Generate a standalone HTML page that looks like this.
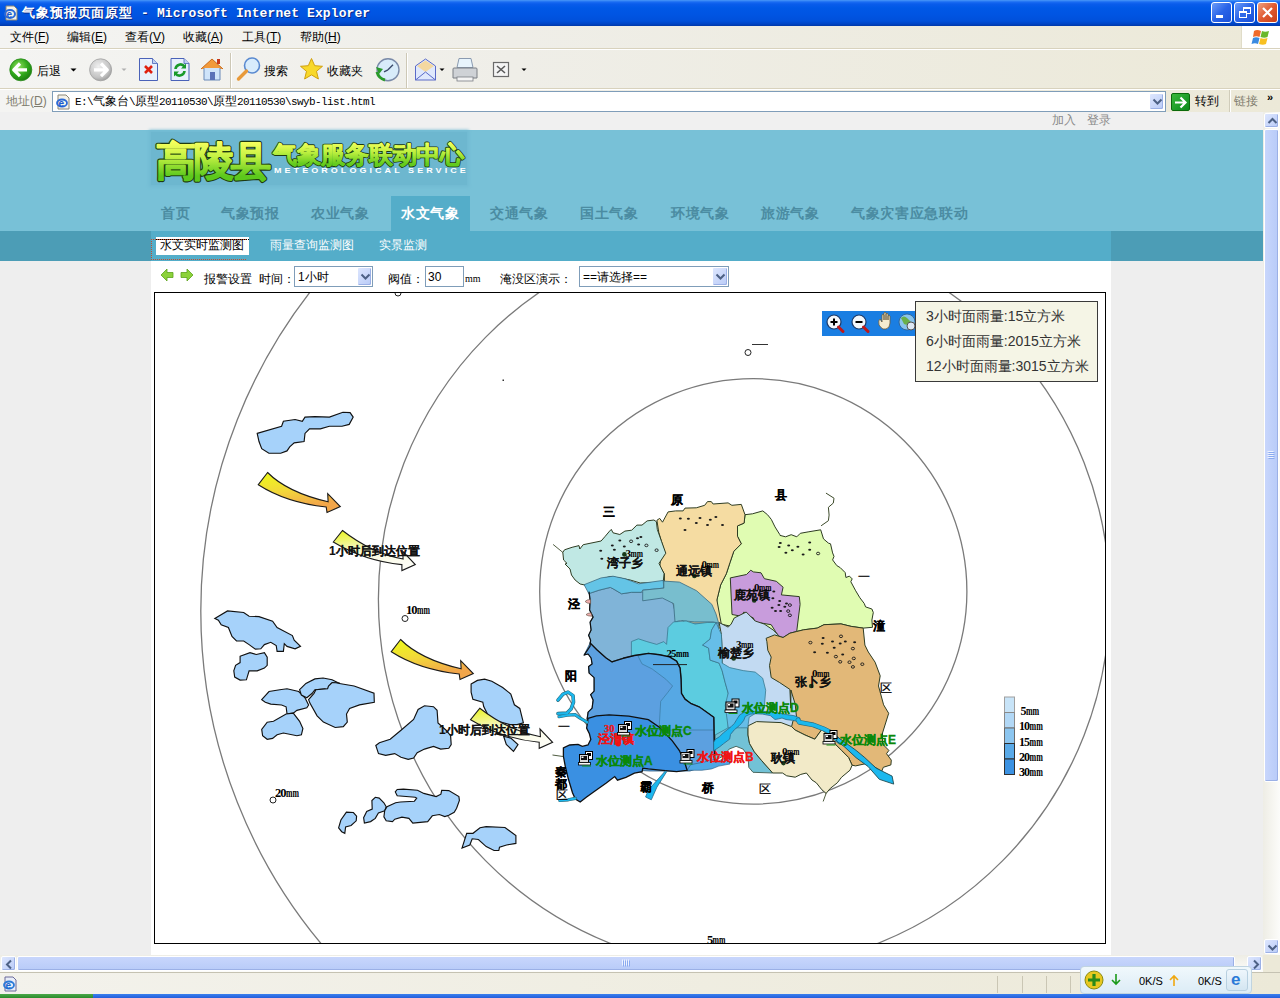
<!DOCTYPE html>
<html><head><meta charset="utf-8">
<style>
*{margin:0;padding:0;box-sizing:border-box}
html,body{width:1280px;height:998px;overflow:hidden;background:#fff;font-family:"Liberation Sans",sans-serif;font-size:12px;color:#000}
.a{position:absolute}
.nw{white-space:nowrap}
#title{left:0;top:0;width:1280px;height:26px;background:linear-gradient(#4a98f8 0,#1a6cf2 2px,#0a5ceb 4px,#0058e6 8px,#0054e2 15px,#0050da 21px,#0044c4 24px,#0038a8 26px)}
#title .t{left:22px;top:4px;color:#fff;font-weight:bold;font-size:13px;white-space:pre;text-shadow:1px 1px 0 #0a2a88}
.tbtn{top:2px;width:21px;height:21px;border:1px solid #fff;border-radius:3px;background:linear-gradient(135deg,#6c9cf8,#2a64e8 50%,#1a50d8)}
#menu{left:0;top:26px;width:1280px;height:23px;background:linear-gradient(to right,#f4f4f2 0,#efeee8 40%,#ece9d8 100%);border-bottom:1px solid #d8d2bd}
#menu span{position:absolute;top:4px;font-size:12px;line-height:14px}
#tb{left:0;top:49px;width:1280px;height:40px;background:linear-gradient(to right,#f4f4f2 0,#efeee8 40%,#ece9d8 100%);border-top:1px solid #fff;border-bottom:1px solid #d8d2bd}
#addr{left:0;top:89px;width:1280px;height:23px;background:linear-gradient(to right,#f4f4f2 0,#efeee8 40%,#ece9d8 100%);border-top:1px solid #fff}
#vs{left:1263px;top:112px;width:17px;height:843px;background:linear-gradient(to right,#eeede5,#fcfcfa)}
#hs{left:0;top:955px;width:1263px;height:17px;background:linear-gradient(#eeede5,#fcfcfa)}
.sbtn{border:1px solid #fff;border-radius:2px;background:linear-gradient(135deg,#dde6fe,#b9cbf7);box-shadow:inset -1px -1px 0 #9bb0e6}
#status{left:0;top:972px;width:1280px;height:22px;background:linear-gradient(to right,#f3f2ec,#ece9d8);border-top:1px solid #c5c2b2}
#task{left:0;top:994px;width:1280px;height:4px;background:linear-gradient(#3a80ee,#245edb)}
.nav{top:205px;font-size:14px;font-weight:bold;color:#4b8ca2;line-height:16px;letter-spacing:0.7px}
.sub{top:238px;font-size:12px;color:#fff;line-height:14px}
</style></head><body>
<div id="title" class="a"><div class="t a"><span style="letter-spacing:0.9px">气象预报页面原型</span><span style="font-family:'Liberation Mono',monospace;letter-spacing:0.1px"> - Microsoft Internet Explorer</span></div>
<svg class="a" style="left:3px;top:5px" width="16" height="16" viewBox="0 0 16 16"><path d="M3 1h8l3 3v11H3z" fill="#f4f2ea" stroke="#8a8676" stroke-width="1"/><ellipse cx="7" cy="9" rx="5" ry="4" fill="none" stroke="#2a6ad8" stroke-width="2"/><text x="3.5" y="12.5" font-size="10" font-weight="bold" fill="#1a5ad0" font-family="Liberation Sans">e</text></svg>
<div class="a tbtn" style="left:1211px"><div class="a" style="left:4px;top:12px;width:7px;height:3px;background:#fff"></div></div>
<div class="a tbtn" style="left:1234px"><div class="a" style="left:8px;top:4px;width:8px;height:7px;border:1px solid #fff;border-top-width:2px"></div><div class="a" style="left:4px;top:8px;width:8px;height:7px;border:1px solid #fff;border-top-width:2px;background:#2e68e8"></div></div>
<div class="a tbtn" style="left:1257px;background:linear-gradient(135deg,#f0a080,#e05a30 50%,#c8401a)"><svg class="a" style="left:3px;top:3px" width="13" height="13"><path d="M2 2L11 11M11 2L2 11" stroke="#fff" stroke-width="2.2"/></svg></div>
</div>
<div id="menu" class="a">
<span style="left:10px">文件(<u>F</u>)</span><span style="left:67px">编辑(<u>E</u>)</span><span style="left:125px">查看(<u>V</u>)</span><span style="left:183px">收藏(<u>A</u>)</span><span style="left:242px">工具(<u>T</u>)</span><span style="left:300px">帮助(<u>H</u>)</span>
<div class="a" style="left:1241px;top:0;width:39px;height:22px;background:#fff;border-left:1px solid #e0dcc8"></div>
<svg class="a" style="left:1251px;top:2px" width="22" height="19" viewBox="0 0 22 19"><path d="M3 3q3-2 7 0l-1.5 6q-3-1.5-6.5 0z" fill="#f06a2a"/><path d="M11 3q3 1.5 7 0l-1.5 6q-3 1.5-7 0z" fill="#6ab82a"/><path d="M2 10q3-1.5 6.5 0L7 16q-3-1.5-6.5 0z" fill="#3a8ae0"/><path d="M9.5 10q3 1.5 7 0L15 16q-3 1.5-7 0z" fill="#f8c020"/></svg>
</div>
<div id="tb" class="a">
 <svg class="a" style="left:0;top:0" width="540" height="40">
  <defs><radialGradient id="gg" cx="0.4" cy="0.35" r="0.7"><stop offset="0" stop-color="#8ee05a"/><stop offset="0.6" stop-color="#2ea61a"/><stop offset="1" stop-color="#1a7a10"/></radialGradient>
  <radialGradient id="gy" cx="0.4" cy="0.35" r="0.7"><stop offset="0" stop-color="#f0f0f0"/><stop offset="0.7" stop-color="#c4c4c4"/><stop offset="1" stop-color="#9a9a9a"/></radialGradient></defs>
  <circle cx="20.8" cy="19.8" r="11" fill="url(#gg)" stroke="#2a8a1a" stroke-width="0.8"/>
  <path d="M14 19.8h13M20 13.5l-6.3 6.3 6.3 6.3" fill="none" stroke="#fff" stroke-width="3.2" stroke-linejoin="round"/>
  <text x="37" y="24.5" font-size="12" font-family="Liberation Sans">后退</text>
  <path d="M70.5 18.5h6l-3 3z" fill="#000"/>
  <circle cx="100.6" cy="19.8" r="11" fill="url(#gy)" stroke="#a0a0a0" stroke-width="0.8"/>
  <path d="M94 19.8h13M101 13.5l6.3 6.3-6.3 6.3" fill="none" stroke="#fff" stroke-width="3.2" stroke-linejoin="round"/>
  <path d="M121.5 18.5h5l-2.5 2.5z" fill="#b0b0b0"/>
  <path d="M139.5 8.5h13l5 5v17h-18z" fill="#e8f0fc" stroke="#4a62b8" stroke-width="1"/><path d="M152.5 8.5v5h5" fill="#c0d0f0" stroke="#4a62b8" stroke-width="0.8"/>
  <path d="M145 16l7 7M152 16l-7 7" stroke="#e02010" stroke-width="2.6"/>
  <path d="M171 8.5h13l5 5v17h-18z" fill="#e8f0fc" stroke="#4a62b8" stroke-width="1"/><path d="M184 8.5v5h5" fill="#c0d0f0" stroke="#4a62b8" stroke-width="0.8"/>
  <path d="M175.5 19a5 5 0 0 1 9-2.5M184.5 21a5 5 0 0 1-9 2.5" fill="none" stroke="#1a9a2a" stroke-width="2.6"/><path d="M186 13.5v5h-5z M174 26.5v-5h5z" fill="#1a9a2a"/>
  <path d="M201 19l11-10 11 10" fill="#f29a3a" stroke="#c86a1a" stroke-width="1"/><path d="M204 18v12h16v-12" fill="#cfe4fa" stroke="#6a8ab8" stroke-width="1"/><rect x="210" y="22" width="5" height="8" fill="#5a72b8"/><rect x="217" y="9" width="3" height="5" fill="#c83a1a"/>
  <line x1="230.5" y1="3" x2="230.5" y2="38" stroke="#cdc8b6"/><line x1="231.5" y1="3" x2="231.5" y2="38" stroke="#fff"/>
  <circle cx="252" cy="15.5" r="7.5" fill="#d8ecfc" stroke="#5a8ad0" stroke-width="1.6"/><path d="M246.5 21l-8 8" stroke="#e89a3a" stroke-width="3.4" stroke-linecap="round"/>
  <text x="264" y="24.5" font-size="12" font-family="Liberation Sans">搜索</text>
  <path d="M311.5 8.5l3.2 7.2 7.8 0.6-6 5 1.9 7.7-6.9-4.1-6.9 4.1 1.9-7.7-6-5 7.8-0.6z" fill="#f8d82a" stroke="#d0a010" stroke-width="1"/>
  <text x="327" y="24.5" font-size="12" font-family="Liberation Sans">收藏夹</text>
  <circle cx="388" cy="19.8" r="11" fill="#d8ecfa" stroke="#7a8aa8" stroke-width="1.4"/><path d="M388 19.8l5-5M388 19.8l-4 2" stroke="#3a4a6a" stroke-width="1.4"/><path d="M377 22a11 11 0 0 0 8 8" stroke="#2a9a2a" stroke-width="3" fill="none"/><path d="M376 17l3 7 4-5z" fill="#2a9a2a"/>
  <line x1="406.5" y1="3" x2="406.5" y2="38" stroke="#cdc8b6"/><line x1="407.5" y1="3" x2="407.5" y2="38" stroke="#fff"/>
  <path d="M415.5 16l10-7 10 7v14h-20z" fill="#dfe8fc" stroke="#5a6ac8" stroke-width="1"/><path d="M417 16l8.5-5.5 8.5 5.5-8.5 6z" fill="#f4d8a0"/><path d="M415.5 30l10-8 10 8" fill="none" stroke="#5a6ac8" stroke-width="1"/>
  <path d="M439.5 18.5h5l-2.5 2.5z" fill="#000"/>
  <path d="M459 8.5h12l2 9h-16z" fill="#e8f4fc" stroke="#8a9ab0" stroke-width="1"/><path d="M454 18h22q1 0 1 1v9h-24v-9q0-1 1-1z" fill="#cfd2d6" stroke="#7a7e84" stroke-width="1"/><rect x="457" y="27" width="16" height="4" fill="#f4f4f4" stroke="#7a7e84" stroke-width="0.8"/>
  <rect x="493.5" y="12.5" width="15" height="14" fill="#f4f4f4" stroke="#6a6a6a" stroke-width="1.2"/><path d="M497 16l8 7M505 16l-8 7" stroke="#5a5a5a" stroke-width="1.6"/>
  <path d="M521.5 18.5h5l-2.5 2.5z" fill="#000"/>
 </svg>
</div>
<div id="addr" class="a">
 <div class="a" style="left:6px;top:4px;color:#7f7c6e;font-size:12px;line-height:14px">地址(<u>D</u>)</div>
 <div class="a" style="left:52px;top:1px;width:1114px;height:21px;background:#fff;border:1px solid #7f9db9"></div>
 <svg class="a" style="left:55px;top:4px" width="16" height="16" viewBox="0 0 16 16"><path d="M3 1h8l3 3v11H3z" fill="#f4f2ea" stroke="#8a8676" stroke-width="1"/><ellipse cx="7" cy="9" rx="5" ry="3.5" fill="none" stroke="#2a6ad8" stroke-width="1.8"/><text x="3.5" y="12.5" font-size="10" font-weight="bold" fill="#1a5ad0" font-family="Liberation Sans">e</text></svg>
 <div class="a nw" style="left:75px;top:5px;font-size:11px;line-height:14px;font-family:'Liberation Mono',monospace;letter-spacing:-0.6px">E:\<span style="font-size:12px;letter-spacing:0">气象台</span>\<span style="font-size:12px;letter-spacing:0">原型</span>20110530\<span style="font-size:12px;letter-spacing:0">原型</span>20110530\swyb-list.html</div>
 <div class="a sbtn" style="left:1149px;top:3px;width:15px;height:17px"><svg class="a" style="left:2px;top:4px" width="11" height="8"><path d="M1.5 1.5l4 4 4-4" fill="none" stroke="#4d6185" stroke-width="2"/></svg></div>
 <div class="a" style="left:1171px;top:3px;width:19px;height:18px;border-radius:2px;background:linear-gradient(135deg,#3ab83a,#0a8a1a);border:1px solid #0a6a0a"><svg class="a" style="left:2px;top:2px" width="14" height="13"><path d="M1 6.5h10M6.5 1.5l5 5-5 5" fill="none" stroke="#fff" stroke-width="2.2"/></svg></div>
 <div class="a" style="left:1195px;top:4px;font-size:12px;line-height:14px">转到</div>
 <div class="a" style="left:1229px;top:0;width:1px;height:23px;background:#d0ccba"></div><div class="a" style="left:1230px;top:0;width:1px;height:23px;background:#fff"></div>
 <div class="a" style="left:1234px;top:4px;font-size:12px;line-height:14px;color:#7f7c6e">链接</div>
 <div class="a" style="left:1267px;top:1px;font-size:11px;font-weight:bold;line-height:12px">»</div>
</div>

<!-- page -->
<div class="a" style="left:0;top:112px;width:1263px;height:843px;background:#eeeeee;overflow:hidden">
  <div class="a" style="left:0;top:0;width:1263px;height:18px;background:#f0f0f0"></div>
  <div class="a nw" style="left:1052px;top:1px;color:#8a8a8a;font-size:12px;line-height:14px">加入<span style="display:inline-block;width:11px"></span>登录</div>
  <div class="a" style="left:0;top:18px;width:1263px;height:101px;background:#78c1d7"></div>
  <div class="a" style="left:0;top:119px;width:1263px;height:30px;background:#4c9db6"></div>
  <div class="a" style="left:151px;top:119px;width:960px;height:30px;background:#54adc9"></div>
  <div class="a" style="left:151px;top:149px;width:960px;height:694px;background:#fff"></div>
</div>
<!-- header logo -->
<div class="a" style="left:151px;top:132px;width:316px;height:53px;background:#6db7cf;box-shadow:0 0 3px 2px #71bad2"></div>
<svg class="a" style="left:150px;top:130px" width="330" height="60"><defs>
<linearGradient id="lg1" gradientUnits="userSpaceOnUse" x1="0" y1="10" x2="0" y2="46"><stop offset="0.05" stop-color="#f6ff5e"/><stop offset="0.45" stop-color="#c6f244"/><stop offset="1" stop-color="#5cc81c"/></linearGradient>
<linearGradient id="lg2" gradientUnits="userSpaceOnUse" x1="0" y1="12" x2="0" y2="34"><stop offset="0.05" stop-color="#f0ff5a"/><stop offset="0.5" stop-color="#b8ee3e"/><stop offset="1" stop-color="#62ca1e"/></linearGradient></defs>
<g font-family="Liberation Sans" font-weight="900" stroke-linejoin="round">
<text x="6" y="45" font-size="40" letter-spacing="-2.4" fill="#1e3a10" stroke="#1e3a10" stroke-width="3.6">高陵县</text>
<text x="6" y="45" font-size="40" letter-spacing="-2.4" fill="url(#lg1)" stroke="url(#lg1)" stroke-width="1.4">高陵县</text>
<text x="123" y="33" font-size="24" letter-spacing="-0.1" fill="#1e3a10" stroke="#1e3a10" stroke-width="2.6">气象服务联动中心</text>
<text x="123" y="33" font-size="24" letter-spacing="-0.1" fill="url(#lg2)" stroke="url(#lg2)" stroke-width="0.9">气象服务联动中心</text>
</g></svg>
<div id="met" class="a nw" style="left:274px;top:167px;font-size:9px;font-weight:bold;line-height:9px;color:#fff;letter-spacing:3.05px;transform:scaleY(0.78);transform-origin:0 50%">METEOROLOGICAL SERVICE</div>
<!-- nav -->
<div class="a" style="left:391px;top:196px;width:79px;height:35px;background:#54adc9"></div>
<div class="a nav nw" style="left:161px">首页</div>
<div class="a nav nw" style="left:221px">气象预报</div>
<div class="a nav nw" style="left:311px">农业气象</div>
<div class="a nav nw" style="left:401px;color:#fff">水文气象</div>
<div class="a nav nw" style="left:490px">交通气象</div>
<div class="a nav nw" style="left:580px">国土气象</div>
<div class="a nav nw" style="left:671px">环境气象</div>
<div class="a nav nw" style="left:761px">旅游气象</div>
<div class="a nav nw" style="left:851px">气象灾害应急联动</div>
<!-- subnav -->
<div class="a" style="left:156px;top:237px;width:93px;height:18px;background:#fff"></div>
<div class="a" style="left:151px;top:239px;width:95px;height:21px;border:1px dotted #c05030;border-right:none"></div><div class="a" style="left:156px;top:239px;width:93px;height:1px;border-top:1px dotted #000"></div>
<div class="a sub nw" style="left:160px;color:#000">水文实时监测图</div>
<div class="a sub nw" style="left:270px">雨量查询监测图</div>
<div class="a sub nw" style="left:379px">实景监测</div>
<!-- tools row -->
<svg class="a" style="left:158px;top:267px" width="40" height="18"><path d="M3 8l6-6v3.5h6v5H9V14z" fill="#8cd23a" stroke="#5aa21a" stroke-width="0.8"/><path d="M35 8l-6-6v3.5h-6v5h6V14z" fill="#8cd23a" stroke="#5aa21a" stroke-width="0.8"/></svg>
<div class="a nw" style="left:204px;top:272px;font-size:12px;line-height:14px">报警设置&nbsp;&nbsp;时间：</div>
<div class="a" style="left:294px;top:266px;width:79px;height:21px;border:1px solid #7f9db9;background:#fff"></div>
<div class="a nw" style="left:298px;top:270px;font-size:12px;line-height:14px">1小时</div>
<div class="a sbtn" style="left:357px;top:267px;width:15px;height:19px"><svg class="a" style="left:2px;top:5px" width="11" height="8"><path d="M1.5 1.5l4 4 4-4" fill="none" stroke="#4d6185" stroke-width="2"/></svg></div>
<div class="a nw" style="left:388px;top:272px;font-size:12px;line-height:14px">阀值：</div>
<div class="a" style="left:425px;top:266px;width:39px;height:21px;border:1px solid #7f9db9;background:#fff"></div>
<div class="a nw" style="left:428px;top:270px;font-size:12px;line-height:14px">30</div>
<div class="a nw" style="left:465px;top:273px;font-size:10px;line-height:12px;font-family:'Liberation Serif',serif">mm</div>
<div class="a nw" style="left:500px;top:272px;font-size:12px;line-height:14px">淹没区演示：</div>
<div class="a" style="left:579px;top:266px;width:150px;height:21px;border:1px solid #7f9db9;background:#fff"></div>
<div class="a nw" style="left:583px;top:270px;font-size:12px;line-height:14px">==请选择==</div>
<div class="a sbtn" style="left:712px;top:267px;width:16px;height:19px"><svg class="a" style="left:2px;top:5px" width="11" height="8"><path d="M1.5 1.5l4 4 4-4" fill="none" stroke="#4d6185" stroke-width="2"/></svg></div>
<!-- map box -->
<div class="a" style="left:154px;top:292px;width:952px;height:652px;border:1px solid #000;background:#fff"></div>
<svg class="a" style="left:0;top:0" width="1280" height="998" viewBox="0 0 1280 998">
<defs><linearGradient id="ga" x1="0" y1="0" x2="0.35" y2="1"><stop offset="0.1" stop-color="#eef41e"/><stop offset="0.5" stop-color="#f2d83a"/><stop offset="0.95" stop-color="#f2a64a"/></linearGradient><linearGradient id="gp" x1="0" y1="0" x2="0.3" y2="1"><stop offset="0.05" stop-color="#eaf42a"/><stop offset="0.45" stop-color="#f4f6b4"/><stop offset="0.7" stop-color="#fafae2"/><stop offset="1" stop-color="#fdfdf4"/></linearGradient><clipPath id="mc"><rect x="155" y="293" width="950" height="650"/></clipPath></defs>
<g clip-path="url(#mc)">
<ellipse cx="753.3" cy="591.4" rx="213.6" ry="212.7" fill="none" stroke="#7a7a7a" stroke-width="1.3"/>
<ellipse cx="744.1" cy="599" rx="365.7" ry="370" fill="none" stroke="#7a7a7a" stroke-width="1.3"/>
<circle cx="720.6" cy="611" r="519.8" fill="none" stroke="#7a7a7a" stroke-width="1.3"/>
<path d="M257.2,433.4 L281.6,426.2 L283.4,421.3 L295.1,419.5 L302.3,421.3 L305.0,417.1 L314.9,416.6 L329.4,417.1 L342.9,412.3 L350.1,412.6 L353.2,417.1 L349.2,424.4 L342.0,426.2 L329.4,426.2 L320.3,428.9 L309.5,428.9 L305.0,433.4 L304.1,441.5 L294.2,442.9 L289.7,446.9 L287.0,450.9 L280.7,453.2 L268.9,453.2 L261.7,448.7 L259.0,441.5Z" fill="#a6d2fa" stroke="#111" stroke-width="1.15" />
<path d="M214.8,618.4 L227.5,610.9 L243.7,612.5 L249.1,616.3 L259.0,616.6 L272.6,621.2 L277.1,627.5 L292.4,635.6 L294.2,640.1 L300.5,646.4 L295.1,648.8 L287.0,646.4 L284.3,643.7 L283.4,651.3 L277.1,651.3 L276.2,645.5 L270.8,642.3 L264.4,644.6 L260.8,648.8 L255.4,649.1 L249.1,644.6 L243.7,641.0 L236.5,641.0 L232.0,636.5 L228.4,627.5 L221.2,624.8 L218.4,620.3Z" fill="#a6d2fa" stroke="#111" stroke-width="1.15" />
<path d="M240.1,656.3 L250.0,652.7 L256.3,654.5 L264.4,652.7 L267.2,657.2 L267.2,665.3 L264.4,668.1 L257.2,670.8 L249.1,670.8 L246.4,679.8 L240.1,680.1 L234.7,677.1 L233.8,670.8 L235.6,665.3 L240.1,662.6Z" fill="#a6d2fa" stroke="#111" stroke-width="1.15" />
<path d="M261.7,699.6 L269.0,691.5 L279.8,689.7 L287.0,688.8 L298.7,691.5 L305.0,697.8 L308.6,705.0 L306.8,707.7 L296.9,710.4 L293.3,713.1 L287.0,713.7 L286.1,706.8 L281.6,705.0 L270.8,704.1 L265.3,702.3Z" fill="#a6d2fa" stroke="#111" stroke-width="1.15" />
<path d="M267.2,722.2 L273.5,721.3 L286.1,714.0 L293.3,713.1 L299.6,721.3 L302.9,728.5 L301.4,734.8 L296.9,735.7 L283.4,733.0 L277.1,734.8 L272.6,738.4 L267.2,739.3 L262.6,735.7 L261.7,729.4Z" fill="#a6d2fa" stroke="#111" stroke-width="1.15" />
<path d="M299.6,689.7 L305.9,683.4 L314.9,678.9 L323.1,678.0 L332.1,679.8 L337.5,682.5 L331.2,683.4 L328.5,689.7 L324.9,688.8 L314.9,689.7 L312.2,693.3 L306.8,697.8 L301.4,695.1Z" fill="#a6d2fa" stroke="#111" stroke-width="1.15" />
<path d="M308.6,699.6 L314.0,693.3 L315.9,689.7 L327.6,688.8 L328.5,686.1 L332.1,682.5 L338.4,683.0 L337.9,683.3 L354.1,686.0 L374.0,693.2 L374.3,702.2 L359.5,704.9 L349.6,708.5 L346.5,714.0 L347.3,722.1 L343.3,726.6 L335.2,727.5 L323.4,722.1 L317.1,715.8 L309.9,703.1Z" fill="#a6d2fa" stroke="#111" stroke-width="1.15" />
<path d="M375.8,745.5 L379.4,742.8 L390.2,739.2 L401.0,730.2 L413.6,719.4 L418.1,709.4 L424.5,705.8 L433.5,706.7 L437.1,710.3 L438.0,723.0 L446.1,730.2 L450.6,735.6 L451.2,744.6 L448.8,748.2 L440.7,749.1 L433.5,746.4 L424.5,749.1 L417.2,752.7 L413.6,758.1 L408.2,759.4 L401.0,757.2 L394.7,753.6 L385.7,755.4 L378.5,753.6Z" fill="#a6d2fa" stroke="#111" stroke-width="1.15" />
<path d="M471.1,684.0 L477.4,680.4 L484.6,679.2 L491.8,681.3 L502.7,687.6 L510.8,694.0 L514.4,704.8 L519.8,708.4 L521.6,715.6 L523.4,722.8 L517.1,724.6 L509.9,724.6 L497.2,721.0 L488.2,715.6 L483.7,706.6 L482.8,702.1 L472.9,699.4 L471.1,692.2Z" fill="#a6d2fa" stroke="#111" stroke-width="1.15" />
<path d="M503.6,736.3 L510.8,738.1 L518.0,744.5 L513.5,751.3 L506.3,744.5Z" fill="#a6d2fa" stroke="#111" stroke-width="1.15" />
<path d="M338.6,827.8 L340.9,820.0 L346.4,812.2 L353.4,812.5 L356.6,816.1 L356.2,820.8 L351.1,825.5 L345.6,827.0 L344.8,833.3 L341.7,831.7Z" fill="#a6d2fa" stroke="#111" stroke-width="1.15" />
<path d="M363.6,817.7 L366.7,811.4 L372.2,809.1 L371.9,800.5 L375.3,797.3 L379.2,798.1 L383.9,802.8 L386.2,806.7 L384.7,810.9 L378.4,813.0 L375.3,818.4 L370.6,821.6 L364.4,823.1Z" fill="#a6d2fa" stroke="#111" stroke-width="1.15" />
<path d="M384.7,810.6 L387.0,806.7 L395.6,802.8 L400.3,802.0 L414.4,801.2 L416.7,798.1 L415.2,797.3 L397.2,795.8 L395.3,791.9 L397.2,789.5 L403.4,789.1 L417.5,790.3 L423.8,793.4 L436.2,796.6 L440.9,794.2 L441.7,790.3 L448.8,790.6 L458.9,796.6 L459.4,800.5 L456.6,808.3 L454.2,812.2 L448.8,815.3 L444.8,816.6 L439.4,814.5 L432.3,815.8 L427.7,821.6 L412.8,823.1 L408.9,818.4 L401.9,817.2 L394.8,819.2 L392.5,821.6 L386.2,820.8 L383.9,816.9Z" fill="#a6d2fa" stroke="#111" stroke-width="1.15" />
<path d="M462.0,848.1 L466.7,833.3 L473.0,833.3 L480.0,827.8 L486.2,826.6 L505.0,827.5 L515.9,835.6 L515.9,843.4 L506.6,845.0 L499.5,847.3 L498.8,850.5 L494.1,850.5 L486.2,846.6 L478.4,839.5 L472.2,838.8 L469.8,845.0Z" fill="#a6d2fa" stroke="#111" stroke-width="1.15" />
<path d="M299.6,689.7 L305.9,683.4 L314.9,678.9 L323.1,678.0 L332.1,679.8 L337.5,682.5 L331.2,683.4 L328.5,689.7 L324.9,688.8 L314.9,689.7 L312.2,693.3 L306.8,697.8 L301.4,695.1" fill="none" stroke="#1a1a1a" stroke-width="0" stroke-linejoin="round" stroke-linecap="round" />
<path d="M267.6,472.5 Q287.2,492.3 328.1,501.8 L327.7,493.6 L340.3,506.6 L327.0,512.5 L326.2,507.0 Q285.9,502.5 258.3,484.7 Z" fill="url(#ga)" stroke="#1a1a1a" stroke-width="1.1"/>
<path d="M400.6,639.5 Q420.2,659.3 461.1,668.8 L460.7,660.6 L473.3,673.6 L460.0,679.5 L459.2,674.0 Q418.9,669.5 391.3,651.7 Z" fill="url(#ga)" stroke="#1a1a1a" stroke-width="1.1"/>
<path d="M342.5,530.5 Q371.6,553.2 403.1,559.0 L402.7,551.3 L415.3,564.6 L401.9,570.6 L401.9,564.6 Q365.0,561.1 333.3,542.0 Z" fill="url(#gp)" stroke="#1a1a1a" stroke-width="1.1"/>
<path d="M479.8,708.2 Q508.9,730.9 540.4,736.7 L540.0,729.0 L552.6,742.3 L539.2,748.3 L539.2,742.3 Q502.3,738.8 470.6,719.7 Z" fill="url(#gp)" stroke="#1a1a1a" stroke-width="1.1"/>
<path d="M745.0,514.7 L752.5,513.8 L762.8,510.9 L767.5,514.7 L771.3,519.4 L775.0,526.9 L779.7,534.4 L780.0,535.4 L785.6,536.8 L791.2,534.7 L796.8,536.8 L800.3,533.3 L808.1,531.9 L820.7,529.8 L823.5,538.9 L828.4,543.1 L830.5,543.8 L832.6,552.9 L834.0,556.4 L832.6,559.9 L836.8,565.6 L840.3,567.7 L845.2,572.6 L845.9,577.5 L849.4,576.1 L852.2,578.9 L850.8,581.7 L855.7,590.8 L859.9,597.8 L864.2,603.4 L865.6,606.9 L871.9,609.0 L873.3,612.5 L871.9,620.0 L872.5,627.3 L863.2,628.1 L851.2,626.4 L841.0,623.9 L824.0,624.7 L817.2,628.1 L803.6,629.8 L796.7,631.5 L760,632 L740,628 L725,625 L716,623 L716.9,600.0 L720.6,585.0 L726.3,573.8 L730.0,562.5 L733.8,551.3 L741.3,543.8 L737.5,536.3 L737.5,525.9 L744.1,523.1 L745.0,514.7Z" fill="#e0fcb2" stroke="#2e3c22" stroke-width="1.0" />
<path d="M656.9,520.3 L659.7,518.4 L662.5,522.2 L668.1,511.9 L675.6,510.9 L683.1,510.9 L685.0,508.1 L696.3,507.8 L704.7,505.3 L707.5,501.6 L711.3,501.6 L713.1,504.0 L728.1,502.9 L731.9,505.3 L741.3,504.4 L745.0,514.7 L744.1,523.1 L737.5,525.9 L737.5,536.3 L741.3,543.8 L733.8,551.3 L730.0,562.5 L726.3,573.8 L720.6,585.0 L716.9,600.0 L722,628 L690,628 L663,600 L664.4,581.3 L664.4,573.8 L659.7,566.3 L660.6,560.6 L664.4,551.3 L658.8,532.5Z" fill="#f5dca2" stroke="#2e3c22" stroke-width="1.0" />
<path d="M562.8,552.4 L564.5,549.8 L572.1,547.3 L579.0,545.6 L579.8,549.0 L583.2,544.7 L601.1,541.0 L605.3,536.2 L609.6,531.1 L611.3,529.4 L613.0,532.8 L619.8,534.5 L624.9,531.1 L631.7,530.2 L636.9,525.1 L642.0,525.1 L647.1,520.9 L653.9,520.0 L656.4,521.7 L657.3,529.4 L661.5,541.3 L665.8,553.2 L659.0,563.4 L664.1,573.7 L663.2,582.2 L640.2,583.0 L630.2,580.0 L620.1,578.0 L610.1,576.5 L602.1,579.0 L596.1,584.5 L585.1,585.1 L580.1,584.0 L575.1,580.0 L571.5,575.0 L570.0,569.0 L565.0,564.0 L567.0,563.4 L563.6,560.0Z" fill="#c0e8e4" stroke="#2e3c22" stroke-width="1.0" />
<path d="M553.4,544.7 L562.8,552.4" fill="none" stroke="#3c4a2a" stroke-width="0.9" stroke-linejoin="round" stroke-linecap="round" />
<path d="M826.3,493.3 L834.0,498.2 L833.3,503.1 L828.4,507.3 L829.1,515.1 L828.4,520.7 L821.4,525.6" fill="none" stroke="#3c4a2a" stroke-width="1" stroke-linejoin="round" stroke-linecap="round" />
<path d="M730.3,577.9 L746.5,574.5 L750.8,570.2 L753.3,571.9 L761.0,572.8 L764.4,578.7 L776.3,581.3 L783.1,587.2 L781.4,594.9 L799.3,596.6 L800.1,604.3 L796.7,631.5 L789.9,633.2 L783.1,637.5 L778.9,636.6 L775.5,631.5 L771.2,624.7 L761.0,623.0 L755.9,623.9 L753.3,617.9 L745.7,614.5 L744.0,611.9 L741.4,616.2 L732.0,614.5Z" fill="#c89cdc" stroke="#2e3c22" stroke-width="1.0" />
<path d="M719.1,622.5 L728.2,627.1 L731.2,624.0 L734.2,618.0 L746.2,612.0 L755.2,621.0 L764.2,624.0 L773.3,630.1 L780.8,637.6 L773.3,640.6 L774.8,652.6 L774.8,663.1 L779.3,672.1 L785.3,681.2 L794.3,685.7 L797.3,690.2 L798.8,727.8 L779.3,727.8 L755.2,727.8 L740.2,727.8 L728.2,727.8 L725.2,705.2 L728.2,693.2 L725.2,682.7 L722.1,670.6 L722.1,649.6 L721.4,634.6Z" fill="#c2daf2" stroke="#2e3c22" stroke-width="1.0" />
<path d="M766.1,638.3 L774.6,634.9 L783.1,637.5 L789.9,633.2 L796.7,631.5 L803.6,629.8 L817.2,628.1 L824.0,624.7 L841.0,623.9 L851.2,626.4 L863.2,628.1 L864.9,645.1 L868.3,652.0 L875.1,662.2 L880.2,675.8 L878.5,686.0 L883.6,704.8 L888.7,713.3 L882.5,733 L882.5,744 L888.9,750.4 L886.5,753.7 L891.3,760.1 L890.9,764.9 L883.3,767.3 L881.7,771.3 L868.3,763.1 L855.6,765.9 L852.1,765.2 L848.6,757.5 L835.9,744.8 L824.7,732.2 L821.9,729.4 L814.8,739.2 L805.0,735.0 L795.2,730.1 L791.6,726.6 L793.0,720.9 L796.6,718.1 L795.2,704.1 L790.9,690.0 L790.8,708.2 L789.9,689.4 L779.7,682.6 L771.2,677.5 L769.5,665.6 L771.2,657.1 L767.8,650.3 L766.9,641.7Z" fill="#e2b878" stroke="#2e3c22" stroke-width="1.0" />
<path d="M715.0,726.6 L731.9,725.2 L748.0,725.9 L748.0,735.0 L749.5,743.4 L754.4,751.9 L761.4,760.3 L772.7,773.0 L753.0,772.3 L748.8,767.3 L748.0,756.1 L743.1,749.1 L736.1,746.3 L729.1,749.1 L723.4,756.1 L715.0,760.3Z" fill="#72c2d6" stroke="#3c5a50" stroke-width="0.9" />
<path d="M748.0,725.9 L756.5,721.6 L781.1,722.6 L791.6,726.6 L795.2,730.1 L805.0,735.0 L814.8,739.2 L821.9,729.4 L824.7,732.2 L835.9,744.8 L841.6,750.5 L848.6,757.5 L852.1,765.2 L850.0,770.2 L841.6,777.2 L837.3,782.8 L830.3,788.4 L826.1,793.4 L821.9,789.8 L816.3,782.8 L812.0,780.0 L806.4,773.0 L800.8,774.4 L795.2,777.2 L786.7,775.8 L782.5,773.0 L772.7,773.0 L761.4,760.3 L754.4,751.9 L749.5,743.4 L748.0,735.0Z" fill="#f2eac8" stroke="#2e3c22" stroke-width="1.0" />
<path d="M826.1,793.4 L823.3,801.1" fill="none" stroke="#3c4a2a" stroke-width="0.9" stroke-linejoin="round" stroke-linecap="round" />
<path d="M589.2,593.2 L590.6,593 L599,590.2 L610.3,587.4 L613.1,588.8 L621.6,593.8 L631.4,592.3 L641.3,592.3 L642.7,592 L670,592 L678,623 L718.6,623 L713.8,717.3 L706.1,711.7 L699.1,706.8 L690.6,703.3 L685,699.1 L681.5,693.4 L681.1,679.4 L680.1,668.1 L676.6,661.1 L669.5,656.9 L659.7,654.8 L648.4,653.4 L634.4,655.5 L623.1,658.3 L611.9,661.8 L612.1,662.0 L606.1,658.0 L597.1,650.0 L590.1,643.0 L590.6,640.2 L588.6,635.2 L591.1,630.1 L590.1,622.1 L593.1,617.1 L589.6,610.1 L590.1,600.1 L589.1,592.1Z" fill="#80b4d8" stroke="#3a6a80" stroke-width="0.8" />
<path d="M584.1,584.7 L601.1,577.9 L613.0,576.2 L624.9,578.7 L638.6,583.8 L663.2,580.4 L663.8,588.1 L642.7,590.2 L641.3,592.3 L631.4,592.3 L621.6,593.8 L613.1,588.8 L610.3,587.4 L599,590.2 L590.6,593 L589,594Z" fill="#64c4e6" stroke="#3a6a80" stroke-width="0.8" />
<path d="M642.7,590.2 L663.8,588.1 L663.8,581.1 L679.4,582.1 L696.5,590.7 L711.8,604.3 L716,614 L718.6,623 L713,621.9 L694.7,621.9 L680.6,620.5 L675,621.9 L673.6,603.6 L662.3,598 L642.7,600.8Z" fill="#78bece" stroke="#3a6a80" stroke-width="0.8" />
<path d="M631.4,657 L631.4,641.6 L638.4,638.8 L646.9,641.6 L656.7,644.4 L663.8,641.6 L666.6,644.4 L668,627.5 L673.6,621.9 L686.1,621.0 L695.1,624.0 L707.1,622.5 L716.1,622.5 L711.6,630.1 L710.1,639.1 L702.6,645.1 L708.6,648.1 L710.1,660.1 L719.1,663.1 L722.1,670.6 L725.2,682.7 L728.2,693.2 L728.2,727.8 L714.6,735.3 L714.6,750.0 L713.8,717.3 L706.1,711.7 L699.1,706.8 L690.6,703.3 L685,699.1 L681.5,693.4 L681.1,679.4 L680.1,668.1 L676.6,661.1 L669.5,656.9 L659.7,654.8 L648.4,653.4Z" fill="#5ccce0" stroke="#3a7a90" stroke-width="0.8" />
<path d="M716.1,622.5 L721.4,634.6 L722.1,649.6 L722.1,663.1 L729.7,667.6 L743.2,670.6 L755.2,672.1 L762.7,678.2 L765.7,690.2 L764.2,708.2 L749.2,717.2 L747.7,727.8 L740.2,727.8 L728.2,727.8 L725.2,705.2 L728.2,693.2 L725.2,682.7 L722.1,670.6 L719.1,663.1 L710.1,660.1 L708.6,648.1 L702.6,645.1 L710.1,639.1 L711.6,630.1Z" fill="#66bee8" stroke="#3a7a90" stroke-width="0.8" />
<path d="M587.1,719.2 L588.1,712.1 L592.1,708.1 L593.1,700.1 L590.6,694.6 L594.1,691.1 L594.1,677.6 L589.1,673.1 L588.6,666.6 L592.1,664.0 L591.1,658.0 L588.1,654.0 L584.1,655.0 L590.1,643.0 L597.1,650.0 L606.1,658.0 L612.1,662.0 L611.9,661.8 L623.1,658.3 L634.4,655.5 L648.4,653.4 L659.7,654.8 L669.5,656.9 L676.6,661.1 L680.1,668.1 L681.1,679.4 L681.5,693.4 L685,699.1 L690.6,703.3 L699.1,706.8 L706.1,711.7 L713.8,717.3 L714.5,756.3 L715.9,761.9 L716,762 L690,771 L650,771 L600,768Z" fill="#5ca0e0" stroke="#2a5a80" stroke-width="0.8" />
<path d="M648.4,653.4 L659.7,654.8 L669.5,656.9 L676.6,661.1 L680.1,668.1 L681.1,679.4 L681.5,693.4 L685,699.1 L690.6,703.3 L699.1,706.8 L706.1,711.7 L713.8,717.3 L713.8,730 L659,730 L660.7,701.3 L667.5,692.8 L672.6,686 L665.8,679.2 L652.2,669 L642,663.9 L638,656Z" fill="#56a8e4" stroke="#3a7aa0" stroke-width="0.7" />
<path d="M687.1,770.3 L690.6,764.7 L704.7,761.9 L714.5,759.1 L715.9,761.9 L730.0,756.3 L730.0,764.0 L718.8,766.1 L711.7,768.9 L701.9,770.3Z" fill="#4ea8e6" stroke="#2a5a80" stroke-width="0.6" />
<path d="M588.0,718.3 L596.4,715.8 L609.1,714.8 L628.8,716.2 L648.4,719.7 L659.7,727.4 L672.3,740.8 L679.4,750.6 L685.0,763.3 L687.1,770.3 L676.6,771.7 L662.5,770.3 L648.4,768.9 L642.8,768.2 L642.1,771.7 L634.4,773.1 L625.9,777.3 L617.5,780.2 L614.7,776.6 L606.3,783.0 L596.4,790.0 L586.6,797.0 L580.2,802.0 L575.3,799.1 L572.5,792.8 L568.3,778.8 L565.5,767.5 L563.4,756.3 L563.4,747.8 L569.7,745.0 L578.1,744.3 L582.3,746.4 L588.0,745.0 L590.8,739.4 L589.4,733.8 L586.6,728.1 L587.3,723.9Z" fill="#3a90e2" stroke="#101010" stroke-width="1.3" />
<path d="M590.1,643.0 L597.1,650.0 L606.1,658.0 L612.1,662.0 L611.9,661.8 L623.1,658.3 L634.4,655.5 L648.4,653.4 L659.7,654.8 L669.5,656.9 L676.6,661.1 L680.1,668.1 L681.1,679.4 L681.5,693.4 L685,699.1 L690.6,703.3 L699.1,706.8 L706.1,711.7 L713.8,717.3 L714.5,756.3 L715.9,761.9" fill="none" stroke="#101010" stroke-width="1.4" stroke-linejoin="round" stroke-linecap="round" />
<path d="M589.1,592.1 L590.1,600.1 L589.6,610.1 L593.1,617.1 L590.1,622.1 L591.1,630.1 L588.6,635.2 L590.6,640.2 L590.1,646.2 L584.1,655.2 L584.1,655.0 L588.1,654.0 L591.1,658.0 L592.1,664.0 L588.6,666.6 L589.1,673.1 L594.1,677.6 L594.1,691.1 L590.6,694.6 L593.1,700.1 L592.1,708.1 L588.1,712.1 L587.1,719.2" fill="none" stroke="#101010" stroke-width="1.2" stroke-linejoin="round" stroke-linecap="round" />
<path d="M800.0,718.0 L793.8,715.6 L785.9,714.5 L778.1,712.9 L770.3,711.7 L762.5,711.3 L756.2,711.7 L750.0,711.7 L743.8,712.5 L739.8,714.8 L736.7,719.5 L734.4,723.4 L731.2,726.6 L727.3,729.7 L723.4,732.8 L719.5,736.7 L715.6,739.1 L713.7,742.2 L713.7,750.8 L719.5,746.9 L723.4,743.8 L729.7,739.1 L730.5,734.4 L734.4,729.7 L739.1,725.8 L741.4,723.4 L743.8,720.3 L745.3,716.4 L750.0,714.1 L754.7,713.7 L762.5,714.1 L770.3,715.6 L775.0,719.5 L778.9,718.8 L782.0,718.0 L785.9,719.5 L792.2,720.3 L800.0,721.9Z" fill="#1cb8ee" stroke="#2a6a8a" stroke-width="0.8" />
<path d="M665.3,771.0 L658.3,778.8 L648.4,790.0 L645.6,797.0 L651.3,799.8 L656.9,787.2 L666.7,771.7Z" fill="#1cb8ee" stroke="#2a6a8a" stroke-width="0.8" />
<path d="M798,720 L799.4,722.3 L813.4,724.9 L823.3,728.7 L830.3,732.2 L837.3,739.9 L840,742" fill="none" stroke="#2a6a7a" stroke-width="4.8" stroke-linejoin="round" stroke-linecap="round" />
<path d="M558.0,700.1 L563.0,694.1 L568.0,692.1 L573.0,695.6 L573.5,702.1 L571.0,709.1 L567.0,713.1 L558.0,713.6" fill="none" stroke="#2a6a7a" stroke-width="3.5999999999999996" stroke-linejoin="round" stroke-linecap="round" />
<path d="M559.0,716.7 L567.0,715.2 L575.1,714.6 L580.1,718.2 L587.1,722.2" fill="none" stroke="#2a6a7a" stroke-width="3.2" stroke-linejoin="round" stroke-linecap="round" />
<path d="M559.8,800.5 L568.3,799.8 L575.3,798.4" fill="none" stroke="#2a6a7a" stroke-width="3.2" stroke-linejoin="round" stroke-linecap="round" />
<path d="M798,720 L799.4,722.3 L813.4,724.9 L823.3,728.7 L830.3,732.2 L837.3,739.9 L840,742" fill="none" stroke="#1cb8ee" stroke-width="3.6" stroke-linejoin="round" stroke-linecap="round" />
<path d="M558.0,700.1 L563.0,694.1 L568.0,692.1 L573.0,695.6 L573.5,702.1 L571.0,709.1 L567.0,713.1 L558.0,713.6" fill="none" stroke="#1cb8ee" stroke-width="2.4" stroke-linejoin="round" stroke-linecap="round" />
<path d="M559.0,716.7 L567.0,715.2 L575.1,714.6 L580.1,718.2 L587.1,722.2" fill="none" stroke="#1cb8ee" stroke-width="2" stroke-linejoin="round" stroke-linecap="round" />
<path d="M559.8,800.5 L568.3,799.8 L575.3,798.4" fill="none" stroke="#1cb8ee" stroke-width="2" stroke-linejoin="round" stroke-linecap="round" />
<path d="M837.5,737 L856.1,750.4 L864.9,757.7 L876.1,768.1 L892.1,776.1 L893.7,784.1 L879.3,779.3 L868.1,766.5 L856.1,757.7 L844,746.4 L836.5,741z" fill="#1cb8ee" stroke="#1e4a50" stroke-width="0.9"/>
<ellipse cx="600.7" cy="550.7" rx="1.5" ry="1" fill="#1a1a1a"/>
<ellipse cx="614.4" cy="549.8" rx="1.5" ry="1" fill="#1a1a1a"/>
<ellipse cx="619.8" cy="540.6" rx="1.5" ry="1" fill="#1a1a1a"/>
<ellipse cx="638.6" cy="544.4" rx="1.5" ry="1" fill="#1a1a1a"/>
<ellipse cx="637.5" cy="538.2" rx="1.5" ry="1" fill="#1a1a1a"/>
<ellipse cx="640.9" cy="536.9" rx="1.5" ry="1" fill="#1a1a1a"/>
<ellipse cx="612.3" cy="545.4" rx="1.5" ry="1" fill="#1a1a1a"/>
<ellipse cx="624.3" cy="546.4" rx="1.5" ry="1" fill="#1a1a1a"/>
<ellipse cx="601.8" cy="558.7" rx="1.5" ry="1" fill="#1a1a1a"/>
<ellipse cx="680.3" cy="518.4" rx="1.5" ry="1" fill="#1a1a1a"/>
<ellipse cx="688.4" cy="518.8" rx="1.5" ry="1" fill="#1a1a1a"/>
<ellipse cx="700.0" cy="517.9" rx="1.5" ry="1" fill="#1a1a1a"/>
<ellipse cx="710.3" cy="519.8" rx="1.5" ry="1" fill="#1a1a1a"/>
<ellipse cx="715.9" cy="517.1" rx="1.5" ry="1" fill="#1a1a1a"/>
<ellipse cx="696.3" cy="523.1" rx="1.5" ry="1" fill="#1a1a1a"/>
<ellipse cx="707.5" cy="525.0" rx="1.5" ry="1" fill="#1a1a1a"/>
<ellipse cx="722.5" cy="525.0" rx="1.5" ry="1" fill="#1a1a1a"/>
<ellipse cx="685.0" cy="529.9" rx="1.5" ry="1" fill="#1a1a1a"/>
<ellipse cx="780.3" cy="543.0" rx="1.5" ry="1" fill="#1a1a1a"/>
<ellipse cx="788.7" cy="545.6" rx="1.5" ry="1" fill="#1a1a1a"/>
<ellipse cx="797.9" cy="546.8" rx="1.5" ry="1" fill="#1a1a1a"/>
<ellipse cx="809.7" cy="542.6" rx="1.5" ry="1" fill="#1a1a1a"/>
<ellipse cx="779.1" cy="547.1" rx="1.5" ry="1" fill="#1a1a1a"/>
<ellipse cx="792.3" cy="550.3" rx="1.5" ry="1" fill="#1a1a1a"/>
<ellipse cx="809.7" cy="549.8" rx="1.5" ry="1" fill="#1a1a1a"/>
<ellipse cx="785.9" cy="552.8" rx="1.5" ry="1" fill="#1a1a1a"/>
<ellipse cx="803.1" cy="554.6" rx="1.5" ry="1" fill="#1a1a1a"/>
<ellipse cx="773.8" cy="591.5" rx="1.5" ry="1" fill="#1a1a1a"/>
<ellipse cx="772.9" cy="598.3" rx="1.5" ry="1" fill="#1a1a1a"/>
<ellipse cx="779.7" cy="600.9" rx="1.5" ry="1" fill="#1a1a1a"/>
<ellipse cx="786.5" cy="603.4" rx="1.5" ry="1" fill="#1a1a1a"/>
<ellipse cx="778.9" cy="605.1" rx="1.5" ry="1" fill="#1a1a1a"/>
<ellipse cx="772.1" cy="607.7" rx="1.5" ry="1" fill="#1a1a1a"/>
<ellipse cx="775.5" cy="611.1" rx="1.5" ry="1" fill="#1a1a1a"/>
<ellipse cx="780.6" cy="611.1" rx="1.5" ry="1" fill="#1a1a1a"/>
<ellipse cx="784.8" cy="606.8" rx="1.5" ry="1" fill="#1a1a1a"/>
<ellipse cx="823.1" cy="638.0" rx="1.5" ry="1" fill="#1a1a1a"/>
<ellipse cx="832.5" cy="641.4" rx="1.5" ry="1" fill="#1a1a1a"/>
<ellipse cx="845.3" cy="641.4" rx="1.5" ry="1" fill="#1a1a1a"/>
<ellipse cx="854.6" cy="642.3" rx="1.5" ry="1" fill="#1a1a1a"/>
<ellipse cx="822.3" cy="643.8" rx="1.5" ry="1" fill="#1a1a1a"/>
<ellipse cx="834.2" cy="647.7" rx="1.5" ry="1" fill="#1a1a1a"/>
<ellipse cx="840.2" cy="643.4" rx="1.5" ry="1" fill="#1a1a1a"/>
<ellipse cx="814.6" cy="652.3" rx="1.5" ry="1" fill="#1a1a1a"/>
<ellipse cx="827.4" cy="652.8" rx="1.5" ry="1" fill="#1a1a1a"/>
<ellipse cx="842.7" cy="654.5" rx="1.5" ry="1" fill="#1a1a1a"/>
<ellipse cx="631.1" cy="541.3" rx="1.6" ry="1.3" fill="none" stroke="#1a1a1a" stroke-width="0.9"/>
<ellipse cx="646.4" cy="545.4" rx="1.6" ry="1.3" fill="none" stroke="#1a1a1a" stroke-width="0.9"/>
<ellipse cx="656.6" cy="550.2" rx="1.6" ry="1.3" fill="none" stroke="#1a1a1a" stroke-width="0.9"/>
<ellipse cx="818.1" cy="553.5" rx="1.6" ry="1.3" fill="none" stroke="#1a1a1a" stroke-width="0.9"/>
<ellipse cx="789.9" cy="605.1" rx="1.6" ry="1.3" fill="none" stroke="#1a1a1a" stroke-width="0.9"/>
<ellipse cx="788.2" cy="611.1" rx="1.6" ry="1.3" fill="none" stroke="#1a1a1a" stroke-width="0.9"/>
<ellipse cx="789.9" cy="615.3" rx="1.6" ry="1.3" fill="none" stroke="#1a1a1a" stroke-width="0.9"/>
<ellipse cx="810.4" cy="642.6" rx="1.6" ry="1.3" fill="none" stroke="#1a1a1a" stroke-width="0.9"/>
<ellipse cx="841.0" cy="636.3" rx="1.6" ry="1.3" fill="none" stroke="#1a1a1a" stroke-width="0.9"/>
<ellipse cx="852.9" cy="648.6" rx="1.6" ry="1.3" fill="none" stroke="#1a1a1a" stroke-width="0.9"/>
<ellipse cx="835.9" cy="656.6" rx="1.6" ry="1.3" fill="none" stroke="#1a1a1a" stroke-width="0.9"/>
<ellipse cx="840.2" cy="661.8" rx="1.6" ry="1.3" fill="none" stroke="#1a1a1a" stroke-width="0.9"/>
<ellipse cx="849.5" cy="662.2" rx="1.6" ry="1.3" fill="none" stroke="#1a1a1a" stroke-width="0.9"/>
<ellipse cx="853.8" cy="658.4" rx="1.6" ry="1.3" fill="none" stroke="#1a1a1a" stroke-width="0.9"/>
<ellipse cx="852.9" cy="666.9" rx="1.6" ry="1.3" fill="none" stroke="#1a1a1a" stroke-width="0.9"/>
<ellipse cx="862.3" cy="664.2" rx="1.6" ry="1.3" fill="none" stroke="#1a1a1a" stroke-width="0.9"/>
<path d="M552.5 755 L563 756.5" stroke="#3a4a2a" stroke-width="0.9"/>
<g id="pinkbumps" fill="#f0b0b0" stroke="#5a4a3a" stroke-width="0.6"><path d="M590.6 599.5q-4 0-5.5 2q1.5 2 5.5 2z"/><path d="M591 612.7q-4 0.5-5 2q2 1.5 6 1.5z"/></g>
<g font-family="Liberation Sans" font-weight="bold" font-size="12" stroke="#000" stroke-width="0.25">
<text x="603" y="516">三</text>
<text x="671" y="504">原</text>
<text x="775" y="499">县</text>
<text x="568" y="608">泾</text>
<text x="565" y="680">阳</text>
<text x="558" y="731" font-weight="normal">一</text>
<text x="555" y="776">秦</text><text x="555" y="788">都</text><text x="556" y="799" font-weight="normal">区</text>
<text x="640" y="791">霸</text>
<text x="702" y="792">桥</text>
<text x="759" y="793" font-weight="normal">区</text>
<text x="880" y="692" font-weight="normal">区</text>
<text x="873" y="630">潼</text>
<text x="858" y="581" font-weight="normal">一</text>
</g>
<g fill="#1a3a1a">
<circle cx="624.4" cy="554.4" r="2.3"/><circle cx="694.4" cy="576" r="2.3"/><circle cx="754.2" cy="600.5" r="2.3"/><circle cx="733.7" cy="658.4" r="2.3"/><circle cx="811.2" cy="686" r="2.3"/><circle cx="783.5" cy="763.1" r="2.3"/>
</g>
<circle cx="618.2" cy="744" r="2.5" fill="#f01010"/>
<g font-family="Liberation Sans" font-weight="bold" font-size="12" fill="#111" stroke="#111" stroke-width="0.12">
<text x="607" y="567">湾子乡</text>
<text x="676" y="575">通远镇</text>
<text x="734" y="599">鹿苑镇</text>
<text x="718" y="657">榆楚乡</text>
<text x="795" y="686">张卜乡</text>
<text x="771" y="762">耿镇</text>
</g>
<g font-family="Liberation Serif" font-weight="bold" fill="#000"><text x="625.5" y="556.8" font-size="11" letter-spacing="-0.9">3</text><text x="630.4" y="556.8" font-size="11" textLength="12.5" lengthAdjust="spacingAndGlyphs">mm</text><text x="701.5" y="567.8" font-size="11" letter-spacing="-0.9">0</text><text x="706.4" y="567.8" font-size="11" textLength="12.5" lengthAdjust="spacingAndGlyphs">mm</text><text x="754" y="590.6" font-size="11" letter-spacing="-0.9">0</text><text x="758.9" y="590.6" font-size="11" textLength="12.5" lengthAdjust="spacingAndGlyphs">mm</text><text x="736" y="647.6" font-size="11" letter-spacing="-0.9">3</text><text x="740.9" y="647.6" font-size="11" textLength="12.5" lengthAdjust="spacingAndGlyphs">mm</text><text x="812" y="677.4" font-size="11" letter-spacing="-0.9">0</text><text x="816.9" y="677.4" font-size="11" textLength="12.5" lengthAdjust="spacingAndGlyphs">mm</text><text x="782" y="754.6" font-size="11" letter-spacing="-0.9">0</text><text x="786.9" y="754.6" font-size="11" textLength="12.5" lengthAdjust="spacingAndGlyphs">mm</text><text x="666.5" y="657.2" font-size="11" letter-spacing="-0.9">25</text><text x="676.0" y="657.2" font-size="11" textLength="13" lengthAdjust="spacingAndGlyphs">mm</text><text x="406" y="614.3" font-size="12.5" letter-spacing="-0.9">10</text><text x="417.0" y="614.3" font-size="12" textLength="13" lengthAdjust="spacingAndGlyphs">mm</text><text x="275" y="797.3" font-size="12.5" letter-spacing="-0.9">20</text><text x="286.0" y="797.3" font-size="12" textLength="13" lengthAdjust="spacingAndGlyphs">mm</text><text x="707" y="944" font-size="12.5" letter-spacing="-0.9">5</text><text x="712.6" y="944" font-size="12" textLength="13" lengthAdjust="spacingAndGlyphs">mm</text></g>
<path d="M653 664.6h34" stroke="#222" stroke-width="1"/>
<g fill="none" stroke="#222" stroke-width="1">
<circle cx="405" cy="618.5" r="3"/><circle cx="273" cy="800" r="3"/><circle cx="398" cy="293" r="3"/><circle cx="748" cy="352.5" r="3"/>
</g>
<path d="M752 344.5h16" stroke="#333" stroke-width="1"/>
<rect x="502.5" y="379.5" width="1.5" height="1.5" fill="#333"/>
<g font-family="Liberation Sans" font-weight="bold" font-size="12" fill="#0a880a" stroke="#0a880a" stroke-width="0.3">
<text x="635" y="735">水位测点C</text>
<text x="596" y="765">水位测点A</text>
<text x="742" y="712">水位测点D</text>
<text x="840" y="744">水位测点E</text>
</g>
<g font-family="Liberation Sans" font-weight="bold" font-size="12" fill="#f01414" stroke="#f01414" stroke-width="0.3">
<text x="697" y="761">水位测点B</text>
<text x="598" y="743">泾渭镇</text>
<text x="604" y="732" font-size="10.5" font-family="Liberation Serif">30</text>
</g>
<g id="pc"><g transform="translate(618,721)"><rect x="6.5" y="0.5" width="7" height="8" fill="#fff" stroke="#000"/><rect x="8" y="2" width="4" height="3" fill="#000"/><rect x="0.5" y="3.5" width="9" height="8" fill="#d8d8d8" stroke="#000"/><rect x="2" y="5" width="6" height="4" fill="#111"/><rect x="2.5" y="5.5" width="2" height="1.5" fill="#fff"/><rect x="-0.5" y="11.5" width="12" height="2.5" fill="#fafafa" stroke="#000" stroke-width="0.8"/><path d="M3 15h9" stroke="#109010" stroke-width="1"/></g><g transform="translate(579,751)"><rect x="6.5" y="0.5" width="7" height="8" fill="#fff" stroke="#000"/><rect x="8" y="2" width="4" height="3" fill="#000"/><rect x="0.5" y="3.5" width="9" height="8" fill="#d8d8d8" stroke="#000"/><rect x="2" y="5" width="6" height="4" fill="#111"/><rect x="2.5" y="5.5" width="2" height="1.5" fill="#fff"/><rect x="-0.5" y="11.5" width="12" height="2.5" fill="#fafafa" stroke="#000" stroke-width="0.8"/><path d="M3 15h9" stroke="#109010" stroke-width="1"/></g><g transform="translate(680.5,749)"><rect x="6.5" y="0.5" width="7" height="8" fill="#fff" stroke="#000"/><rect x="8" y="2" width="4" height="3" fill="#000"/><rect x="0.5" y="3.5" width="9" height="8" fill="#d8d8d8" stroke="#000"/><rect x="2" y="5" width="6" height="4" fill="#111"/><rect x="2.5" y="5.5" width="2" height="1.5" fill="#fff"/><rect x="-0.5" y="11.5" width="12" height="2.5" fill="#fafafa" stroke="#000" stroke-width="0.8"/><path d="M3 15h9" stroke="#109010" stroke-width="1"/></g><g transform="translate(725.5,698.5)"><rect x="6.5" y="0.5" width="7" height="8" fill="#fff" stroke="#000"/><rect x="8" y="2" width="4" height="3" fill="#000"/><rect x="0.5" y="3.5" width="9" height="8" fill="#d8d8d8" stroke="#000"/><rect x="2" y="5" width="6" height="4" fill="#111"/><rect x="2.5" y="5.5" width="2" height="1.5" fill="#fff"/><rect x="-0.5" y="11.5" width="12" height="2.5" fill="#fafafa" stroke="#000" stroke-width="0.8"/><path d="M3 15h9" stroke="#109010" stroke-width="1"/></g><g transform="translate(823.5,730)"><rect x="6.5" y="0.5" width="7" height="8" fill="#fff" stroke="#000"/><rect x="8" y="2" width="4" height="3" fill="#000"/><rect x="0.5" y="3.5" width="9" height="8" fill="#d8d8d8" stroke="#000"/><rect x="2" y="5" width="6" height="4" fill="#111"/><rect x="2.5" y="5.5" width="2" height="1.5" fill="#fff"/><rect x="-0.5" y="11.5" width="12" height="2.5" fill="#fafafa" stroke="#000" stroke-width="0.8"/><path d="M3 15h9" stroke="#109010" stroke-width="1"/></g></g>
<g font-family="Liberation Sans" font-weight="bold" font-size="12" fill="#111" stroke="#111" stroke-width="0.12">
<text x="329" y="554.5">1小时后到达位置</text>
<text x="439" y="734">1小时后到达位置</text>
</g>
<!-- legend -->
<g stroke="#6a6a6a" stroke-width="1">
<rect x="1004.5" y="697" width="10" height="15.5" fill="#c8e4f8" stroke="#a0a0a0"/>
<rect x="1004.5" y="712.5" width="10" height="15.5" fill="#b2d8f6" stroke="#8a8a8a"/>
<rect x="1004.5" y="728" width="10" height="15.5" fill="#8cc6f0"/>
<rect x="1004.5" y="743.5" width="10" height="15.5" fill="#5aaae8" stroke="#303030"/>
<rect x="1004.5" y="759" width="10" height="15.5" fill="#3c92e2" stroke="#303030"/>
</g>
<g font-family="Liberation Serif" font-weight="bold" fill="#000"><text x="1020.5" y="714.8" font-size="12" letter-spacing="-0.9">5</text><text x="1025.9" y="714.8" font-size="11.5" textLength="13.3" lengthAdjust="spacingAndGlyphs">mm</text><text x="1019" y="730.3" font-size="12" letter-spacing="-0.9">10</text><text x="1029.5" y="730.3" font-size="11.5" textLength="13.3" lengthAdjust="spacingAndGlyphs">mm</text><text x="1019" y="745.8" font-size="12" letter-spacing="-0.9">15</text><text x="1029.5" y="745.8" font-size="11.5" textLength="13.3" lengthAdjust="spacingAndGlyphs">mm</text><text x="1019" y="761.3" font-size="12" letter-spacing="-0.9">20</text><text x="1029.5" y="761.3" font-size="11.5" textLength="13.3" lengthAdjust="spacingAndGlyphs">mm</text><text x="1019" y="775.8" font-size="12" letter-spacing="-0.9">30</text><text x="1029.5" y="775.8" font-size="11.5" textLength="13.3" lengthAdjust="spacingAndGlyphs">mm</text></g>

<!-- map toolbar -->
<rect x="822" y="311" width="94" height="25" fill="#1a7ee2"/>
<g>
<circle cx="834" cy="322" r="7" fill="#f4f8fc" stroke="#1a3a6a" stroke-width="1.2"/><path d="M838.5 327l4.5 4.5" stroke="#c01818" stroke-width="3" stroke-linecap="round"/><path d="M830.5 322h7M834 318.5v7" stroke="#000" stroke-width="2"/>
<circle cx="859" cy="322" r="7" fill="#f4f8fc" stroke="#1a3a6a" stroke-width="1.2"/><path d="M863.5 327l4.5 4.5" stroke="#c01818" stroke-width="3" stroke-linecap="round"/><path d="M855.5 322h7" stroke="#000" stroke-width="2"/>
<path d="M879 325q-1-5 1-6l2 3v-7q1-1.5 2 0v5v-7q1-1.5 2 0v7v-6q1-1.5 2 0v6v-4q1-1.5 2 0v7q0 5-4 6h-3q-2-1-4-4z" fill="#f4ecd0" stroke="#6a5a3a" stroke-width="0.8"/>
<circle cx="907" cy="322" r="8" fill="#8ac4ec" stroke="#2a5a8a" stroke-width="0.8"/><path d="M901 318q3-3 6 0t4 4q-3 4-7 2z" fill="#6ab04a"/><circle cx="911" cy="326" r="4" fill="#dde8f4" stroke="#555" stroke-width="1"/>
</g>
<!-- tooltip -->
<rect x="915.5" y="301.5" width="182" height="80" fill="#f5f5e6" stroke="#3a3a3a" stroke-width="1"/>
<g font-family="Liberation Sans" font-size="14" fill="#333">
<text x="926" y="321">3小时面雨量:15立方米</text>
<text x="926" y="346">6小时面雨量:2015立方米</text>
<text x="926" y="371">12小时面雨量:3015立方米</text>
</g>

</g>
</svg>
<!-- scrollbars -->
<div id="vs" class="a">
  <div class="a sbtn" style="left:1px;top:1px;width:15px;height:15px"><svg class="a" style="left:2px;top:3px" width="11" height="8"><path d="M1.5 6l4-4 4 4" fill="none" stroke="#4d6185" stroke-width="2"/></svg></div>
  <div class="a sbtn" style="left:1px;top:17px;width:15px;height:653px;background:linear-gradient(to right,#c8d6fc,#b8cbf8)"></div><svg class="a" style="left:4px;top:339px" width="9" height="9"><path d="M0.5 0.5h6M0.5 2.5h6M0.5 4.5h6M0.5 6.5h6" stroke="#eef2fe"/><path d="M1.5 1.5h6M1.5 3.5h6M1.5 5.5h6M1.5 7.5h6" stroke="#8aaaf0"/></svg>
  <div class="a sbtn" style="left:1px;top:827px;width:15px;height:15px"><svg class="a" style="left:2px;top:4px" width="11" height="8"><path d="M1.5 1.5l4 4 4-4" fill="none" stroke="#4d6185" stroke-width="2"/></svg></div>
</div>
<div id="hs" class="a">
  <div class="a sbtn" style="left:1px;top:1px;width:15px;height:15px"><svg class="a" style="left:3px;top:2px" width="8" height="11"><path d="M6 1.5l-4 4 4 4" fill="none" stroke="#4d6185" stroke-width="2"/></svg></div>
  <div class="a sbtn" style="left:17px;top:1px;width:1218px;height:15px;background:linear-gradient(#c8d6fc,#b8cbf8)"></div><svg class="a" style="left:622px;top:4px" width="9" height="9"><path d="M0.5 0.5v6M2.5 0.5v6M4.5 0.5v6M6.5 0.5v6" stroke="#eef2fe"/><path d="M1.5 1.5v6M3.5 1.5v6M5.5 1.5v6M7.5 1.5v6" stroke="#8aaaf0"/></svg>
  <div class="a sbtn" style="left:1247px;top:1px;width:15px;height:15px"><svg class="a" style="left:4px;top:2px" width="8" height="11"><path d="M2 1.5l4 4-4 4" fill="none" stroke="#4d6185" stroke-width="2"/></svg></div>
</div>
<div class="a" style="left:1263px;top:955px;width:17px;height:17px;background:#ece9d8"></div>
<div id="status" class="a">
  <svg class="a" style="left:2px;top:3px" width="16" height="16" viewBox="0 0 16 16"><path d="M3 1h8l3 3v11H3z" fill="#e8ecf8" stroke="#6a6a9a" stroke-width="1"/><ellipse cx="7" cy="9" rx="5" ry="3.5" fill="none" stroke="#2a7ad8" stroke-width="1.8"/><text x="3.5" y="12.5" font-size="10" font-weight="bold" fill="#1a6ad0" font-family="Liberation Sans">e</text></svg>
  <div class="a" style="left:997px;top:3px;width:1px;height:17px;background:#cac6b4"></div>
  <div class="a" style="left:1022px;top:3px;width:1px;height:17px;background:#cac6b4"></div>
  <div class="a" style="left:1046px;top:3px;width:1px;height:17px;background:#cac6b4"></div>
  <div class="a" style="left:1070px;top:3px;width:1px;height:17px;background:#cac6b4"></div>
  <div class="a" style="left:1080px;top:-7px;width:172px;height:28px;border-radius:4px;background:linear-gradient(#f0f8fc,#dcecf6);border:1px solid #c0d4e0"></div>
  <svg class="a" style="left:1084px;top:-3px" width="20" height="20"><circle cx="10" cy="10" r="9" fill="#e8c820" stroke="#8a8a10"/><path d="M10 4v12M4 10h12" stroke="#2a8a1a" stroke-width="3.2"/></svg>
  <svg class="a" style="left:1110px;top:0" width="12" height="14"><path d="M6 1v10M2 7l4 4 4-4" fill="none" stroke="#1a9a1a" stroke-width="1.6"/></svg>
  <div class="a nw" style="left:1139px;top:2px;font-size:11px;line-height:13px">0K/S</div>
  <svg class="a" style="left:1168px;top:0" width="12" height="14"><path d="M6 13V3M2 7l4-4 4 4" fill="none" stroke="#f0a810" stroke-width="1.6"/></svg>
  <div class="a nw" style="left:1198px;top:2px;font-size:11px;line-height:13px">0K/S</div>
  <div class="a" style="left:1226px;top:-4px;width:22px;height:22px;border-radius:3px;background:linear-gradient(#eef6fc,#d4e6f2);border:1px solid #b8d0e0"><div class="a" style="left:4px;top:0;color:#2a7ad8;font-weight:bold;font-size:17px;line-height:20px">e</div></div>
</div>
<div id="task" class="a"><div class="a" style="left:0;top:0;width:93px;height:4px;background:linear-gradient(#4aa84a,#2a8a2a)"></div></div>
</body></html>
